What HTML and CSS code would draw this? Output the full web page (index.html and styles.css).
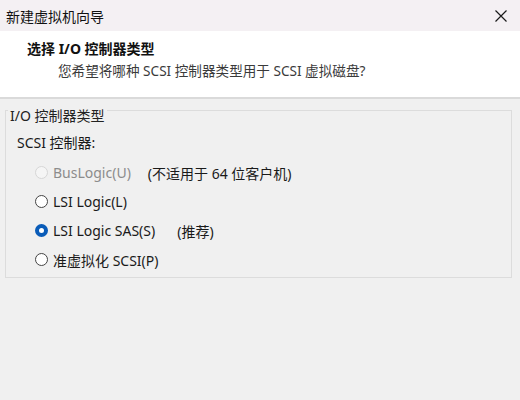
FILE: index.html
```html
<!DOCTYPE html>
<html lang="zh-CN">
<head>
    <meta charset="UTF-8">
    <title>新建虚拟机向导</title>
    <link rel="stylesheet" href="styles.css">
</head>
<body>
    <div class="window">
        <div class="titlebar">
            <span class="title">新建虚拟机向导</span>
            <svg class="close" width="12" height="12" viewBox="0 0 12 12">
                <path d="M0.5 0.5 L11.5 11.5 M11.5 0.5 L0.5 11.5" stroke="#1a1a1a" stroke-width="1.2" fill="none"/>
            </svg>
        </div>
        <div class="header">
            <div class="header-title">选择 I/O 控制器类型</div>
            <div class="header-sub">您希望将哪种 SCSI 控制器类型用于 SCSI 虚拟磁盘?</div>
        </div>
        <div class="body">
            <div class="group">
                <div class="group-title">I/O 控制器类型</div>
                <div class="group-label">SCSI 控制器:</div>
                <div class="option disabled">
                    <span class="radio"></span>
                    <span class="option-text">BusLogic(U)</span>
                    <span class="note">(不适用于 64 位客户机)</span>
                </div>
                <div class="option">
                    <span class="radio"></span>
                    <span class="option-text">LSI Logic(L)</span>
                </div>
                <div class="option checked">
                    <span class="radio"></span>
                    <span class="option-text">LSI Logic SAS(S)</span>
                    <span class="note">(推荐)</span>
                </div>
                <div class="option">
                    <span class="radio"></span>
                    <span class="option-text">准虚拟化 SCSI(P)</span>
                </div>
            </div>
        </div>
    </div>
</body>
</html>
```

FILE: styles.css
```css
body {
    margin: 0;
    font-family: "Noto Sans", "Noto Sans CJK SC", sans-serif;
    font-size: 14px;
    color: #1a1a1a;
    background-color: #f0f0f0;
}

.window {
    width: 520px;
    height: 400px;
    background-color: #f0f0f0;
    overflow: hidden;
}

.titlebar {
    height: 31px;
    display: flex;
    align-items: center;
    justify-content: space-between;
    padding: 0 13px 0 6px;
    background-color: #f4f0f3;
}

.title {
    font-size: 14px;
    color: #111;
}

.close {
    display: block;
}

.header {
    height: 68px;
    background-color: #ffffff;
    padding: 8px 0 0 27px;
    box-sizing: border-box;
    border-bottom: 2px solid #dadada;
}

.header-title {
    font-weight: bold;
    font-size: 14px;
    line-height: 20px;
    color: #111;
}

.header-sub {
    padding-left: 31px;
    font-size: 13.6px;
    line-height: 20px;
    margin-top: 2px;
    color: #3a3a3a;
}

.body {
    padding: 11px 8px 0 5px;
}

.group {
    padding: 0 0 3px 11px;
    border: 1px solid #dcdcdc;
}

.group-title {
    width: fit-content;
    margin: -4px 0 0 -9px;
    padding: 0 2px;
    line-height: 18px;
    background-color: #f0f0f0;
    color: #222;
}

.group-label {
    line-height: 20px;
    margin: 8px 0 5px 0;
}

.option {
    display: flex;
    align-items: center;
    height: 29px;
    padding-left: 18px;
}

.radio {
    width: 11px;
    height: 11px;
    border: 1px solid #444;
    border-radius: 50%;
    background-color: #fff;
    margin-right: 5px;
    flex-shrink: 0;
}

.option.disabled .radio {
    border-color: #d6d6d6;
    background-color: #f5f5f5;
}

.option.disabled .option-text {
    color: #8c8c8c;
}

.option.checked .radio {
    width: 5px;
    height: 5px;
    border: 4px solid #0a5cb8;
    background-color: #fff;
}

.note {
    margin-left: 22px;
}

.option.disabled .note {
    margin-left: 17px;
}
```
